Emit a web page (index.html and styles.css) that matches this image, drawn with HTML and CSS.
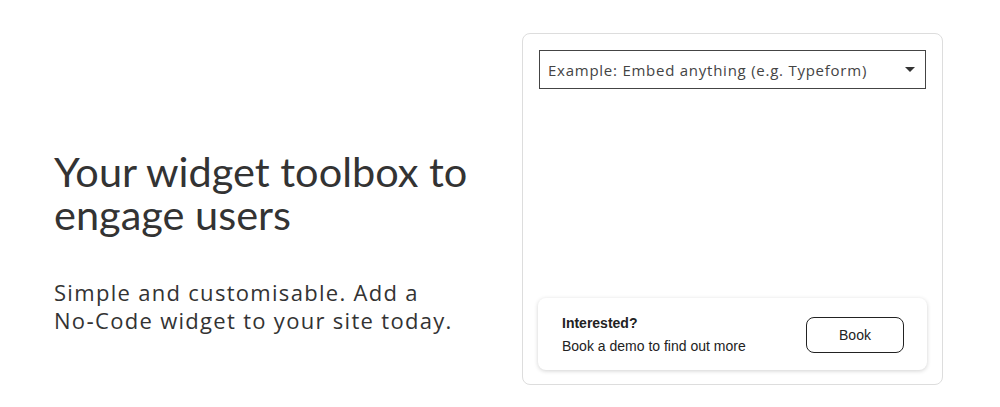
FILE: index.html
```html
<!DOCTYPE html>
<html lang="en">

<head>
    <meta charset="UTF-8">
    <meta name="viewport" content="width=device-width, initial-scale=1.0">
    <title>Widget Toolbox</title>
    <link rel="stylesheet" href="styles.css">
</head>

<body>
    <div class="page">
        <div class="intro">
            <h1>Your widget toolbox to engage users</h1>
            <p>Simple and customisable. Add a No&#8209;Code widget to your site today.</p>
        </div>

        <div class="demo-card">
            <div class="select-box">
                <span>Example: Embed anything (e.g. Typeform)</span>
                <span class="caret"></span>
            </div>

            <div class="cta">
                <div class="cta-text">
                    <strong>Interested?</strong>
                    <span>Book a demo to find out more</span>
                </div>
                <button class="book-button">Book</button>
            </div>
        </div>
    </div>
</body>

</html>
```

FILE: styles.css
```css
body {
    margin: 0;
    background: #fff;
    color: #333;
}

.page {
    display: flex;
    padding: 33px 57px 22px 54px;
    gap: 40px;
}

.intro {
    flex: 1;
    padding-top: 117px;
}

h1 {
    font-family: Lato, sans-serif;
    font-weight: 400;
    font-size: 41.5px;
    line-height: 43px;
    letter-spacing: 0;
    color: #333;
    margin: 0 0 42px 0;
}

.intro p {
    max-width: 420px;
    font-family: "Open Sans", sans-serif;
    font-size: 22px;
    line-height: 28px;
    letter-spacing: 1.3px;
    color: #333;
    margin: 0;
}

.demo-card {
    width: 387px;
    height: 318px;
    border: 1px solid #ddd;
    border-radius: 8px;
    padding: 16px;
    display: flex;
    flex-direction: column;
    justify-content: space-between;
}

.select-box {
    display: flex;
    align-items: center;
    justify-content: space-between;
    height: 37px;
    border: 1px solid #444;
    padding: 0 10px 0 8px;
    font-family: "Open Sans", sans-serif;
    font-size: 15px;
    letter-spacing: 0.75px;
    color: #444;
}

.caret {
    width: 0;
    height: 0;
    border-left: 5px solid transparent;
    border-right: 5px solid transparent;
    border-top: 5px solid #333;
}

.cta {
    display: flex;
    align-items: center;
    justify-content: space-between;
    height: 72px;
    margin: 0 -1px -2px -1px;
    padding: 0 23px 0 24px;
    border-radius: 8px;
    box-shadow: 0 1px 4px rgba(0, 0, 0, 0.18);
    font-family: "Liberation Sans", Arial, sans-serif;
    font-size: 14px;
    color: #222;
}

.cta-text {
    display: flex;
    flex-direction: column;
    gap: 7px;
}

.book-button {
    width: 98px;
    height: 36px;
    margin-top: 1px;
    background: #fff;
    border: 1px solid #222;
    border-radius: 8px;
    font-family: "Liberation Sans", Arial, sans-serif;
    font-size: 14px;
    color: #222;
    cursor: pointer;
}
```
